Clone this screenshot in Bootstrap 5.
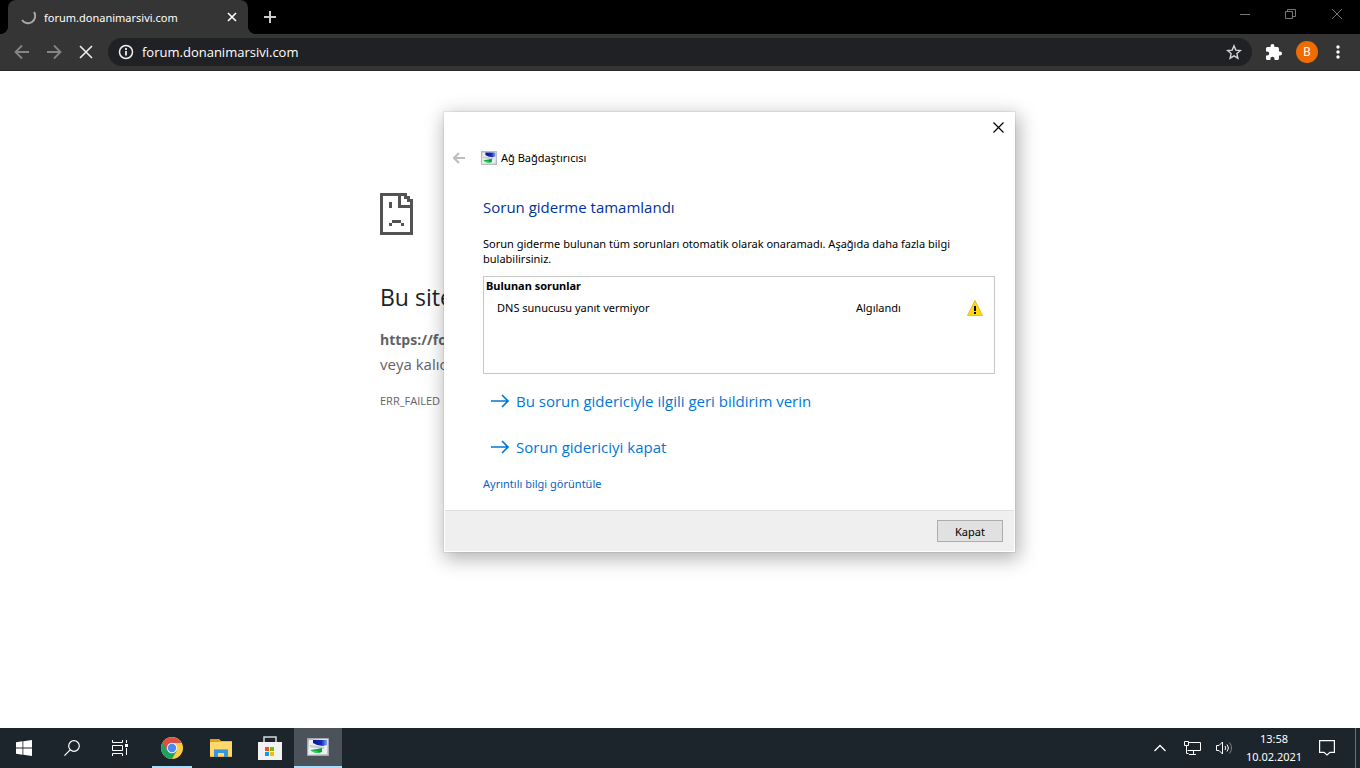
<!DOCTYPE html>
<html lang="tr">
<head>
<meta charset="utf-8">
<meta name="viewport" content="width=device-width, initial-scale=1">
<title>forum.donanimarsivi.com</title>
<link href="https://cdn.jsdelivr.net/npm/bootstrap@5.3.0/dist/css/bootstrap.min.css" rel="stylesheet">
<style>
body { font-family: "Noto Sans", "Open Sans", sans-serif; font-size: 11px; line-height: 15px; color: #000; background: #fff; }
svg { display: block; flex: none; }
button { border: 0; padding: 0; background: none; color: inherit; font-size: 11px; line-height: 15px; }
/* browser chrome */
.tab-strip { background: #000; height: 34px; padding-left: 8px; color: #fff; }
.browser-tab { width: 240px; height: 34px; background: #353535; border-radius: 8px 8px 0 0; padding: 0 11px 0 12px; }
.browser-tab::before, .browser-tab::after { content: ""; position: absolute; bottom: 0; width: 8px; height: 8px; }
.browser-tab::before { left: -8px; background: radial-gradient(circle at 0 0, transparent 8px, #353535 8px); }
.browser-tab::after { right: -8px; background: radial-gradient(circle at 100% 0, transparent 8px, #353535 8px); }
.window-controls { color: #777; gap: 35px; padding: 8px 17px 0 0; }
.toolbar { background: #353535; height: 37px; padding: 0 12px; color: #fff; border-bottom: 1px solid #292929; }
.toolbar-actions { gap: 14px; }
.nav-tools { gap: 12px; width: 82px; }
.address-box { height: 28px; border-radius: 14px; background: #202124; padding: 0 10px; }
.address-box input { font-family: "Open Sans", sans-serif; background: none; border: 0; outline: 0; color: #fff; font-size: 13px; line-height: 18px; padding: 0; min-width: 0; }
.avatar { width: 22px; height: 22px; background: #ef6c00; font-size: 12px; font-family: Roboto, sans-serif; }
/* error page */
.error-page { font-family: "Open Sans", sans-serif; width: 600px; max-width: 100%; margin: 0 auto; padding-top: 122px; color: #5f6368; }
.error-page h1 { font-size: 23px; line-height: 28px; font-weight: 500; color: #202124; margin: 48px 0 16px; }
.error-page p { font-size: 15px; line-height: 24px; margin: 0 0 16px; }
.error-page strong { font-size: 14px; }
.error-page .code { font-size: 11px; line-height: 18px; }
/* troubleshooter window */
.wizard { left: 444px; top: 41px; width: 571px; background: #fff; border: 1px solid #fff; box-shadow: 0 0 0 1px rgba(0,0,0,.06), 2px 5px 18px 2px rgba(0,0,0,.3); }
.wizard-top { padding: 9px 10px 0; }
.wizard-name { padding: 17px 8px 0; }
.wizard-body { padding: 31px 19px 19px 38px; }
.wizard h2 { font-family: "Open Sans", sans-serif; font-size: 15px; line-height: 22px; font-weight: 400; color: #003399; margin: 0 0 18px; }
.issues { height: 98px; border: 1px solid #c8c8c8; margin: 10px 0 16px; padding: 1px 2px; }
.issues table { width: 100%; }
.issues th { font-weight: 700; padding: 0; line-height: 15px; }
.issues td { padding: 5px 0 0; line-height: 20px; }
.issues td:first-child { padding-left: 11px; }
.col-state { width: 111px; }
.col-icon { width: 25px; }
.command { font-family: "Open Sans", sans-serif; color: #0078d7; font-size: 15px; line-height: 22px; gap: 7px; margin-left: 8px; text-decoration: none; }
.commands { gap: 24px; margin-bottom: 18px; }
.details { color: #0a5fc4; text-decoration: none; }
.wizard-foot { background: #efefef; border-top: 1px solid #dfdfdf; padding: 9px 11px; }
.wizard-foot button { background: #e1e1e1; border: 1px solid #adadad; width: 66px; height: 22px; }
/* taskbar */
.taskbar { background: #1c252c; height: 40px; color: #fff; }
.taskbar button { width: 48px; height: 40px; }
.taskbar .pinned { margin-left: 3px; }
.taskbar .app { width: 49px; }
.taskbar .running { background: linear-gradient(#a9dcff, #a9dcff) 50% 100% / 40px 2px no-repeat; }
.taskbar .focused { width: 48px; background: #4b5259; border-bottom: 2px solid #a9dcff; }
.taskbar .tray { width: 32px; }
.clock { width: 68px; line-height: 18px; margin-right: 3px; }
.show-desktop { width: 5px; border-left: 1px solid #6a7075; margin-left: 12px; }
</style>
</head>
<body>
<svg width="0" height="0" class="position-absolute" aria-hidden="true">
  <defs>
    <linearGradient id="frame" x2="1" y2="1"><stop stop-color="#aab0b8"/><stop offset=".4" stop-color="#e4e6e8"/><stop offset="1" stop-color="#bbb"/></linearGradient>
    <linearGradient id="screen"><stop stop-color="#0a188c"/><stop offset=".6" stop-color="#1428b8"/><stop offset="1" stop-color="#7fa6ee"/></linearGradient>
    <symbol id="adapter" viewBox="0 0 22 18" preserveAspectRatio="none">
      <path d="M.5.5h21v17H.5z" fill="url(#frame)" stroke="#a5a9ad"/>
      <path d="M2 2h18v14H2z" fill="#eceef0"/>
      <path d="M6 2h14v5l-4 1-6-1-4-2z" fill="url(#screen)"/>
      <path d="M3 7l8 1 6 1v2L3 9z" fill="#c3cad6"/>
      <path d="M4 12l6-1 5-1v4l-3 1-3-1-5-1z" fill="#0aa43c"/>
      <path d="M3 12l7 1 3 2-5 0z" fill="#35cf63"/>
    </symbol>
  </defs>
</svg>
<div class="d-flex flex-column vh-100 overflow-hidden">
  <header>
    <div class="tab-strip d-flex">
      <div class="browser-tab position-relative d-flex align-items-center">
        <svg width="16" height="16" viewBox="0 0 16 16" fill="none" stroke="#a8a8a8" stroke-width="2"><path d="M14 3A6.500 6.500 0 0 1 2 11"/></svg>
        <span class="flex-grow-1 ps-2">forum.donanimarsivi.com</span>
        <button type="button" aria-label="Sekmeyi kapat"><svg width="10" height="10" viewBox="0 0 10 10" stroke="#fff" stroke-width="1.600"><path d="M1 1l8 8M9 1l-8 8"/></svg></button>
      </div>
      <button type="button" class="ms-3" aria-label="Yeni sekme"><svg width="12" height="12" viewBox="0 0 12 12" stroke="#ccc" stroke-width="2"><path d="M6 0v12M0 6h12"/></svg></button>
      <div class="window-controls d-flex align-items-start ms-auto">
        <button type="button" aria-label="Simge durumuna küçült"><svg width="10" height="12" viewBox="0 0 10 12" stroke="currentColor"><path d="M0 6.500h10"/></svg></button>
        <button type="button" aria-label="Geri yükle"><svg width="11" height="12" viewBox="0 0 11 12" fill="none" stroke="currentColor"><path d="M.5 3.500h7v7h-7zM2.500 3.500v-2h8v7h-3"/></svg></button>
        <button type="button" aria-label="Kapat"><svg width="12" height="12" viewBox="0 0 12 12" stroke="currentColor"><path d="M1 1l10 10M11 1L1 11"/></svg></button>
      </div>
    </div>
    <div class="toolbar toolbar-actions d-flex align-items-center">
      <div class="nav-tools d-flex flex-shrink-0">
        <button type="button" aria-label="Geri"><svg width="20" height="20" viewBox="0 0 20 20" fill="none" stroke="#858585" stroke-width="1.800"><path d="M17 10H4M10 3.500L3.500 10l6.500 6.500"/></svg></button>
        <button type="button" aria-label="İleri"><svg width="20" height="20" viewBox="0 0 20 20" fill="none" stroke="#858585" stroke-width="1.800"><path d="M3 10h13M10 3.500L16.500 10 10 16.500"/></svg></button>
        <button type="button" aria-label="Durdur"><svg width="20" height="20" viewBox="0 0 20 20" stroke="#eee" stroke-width="1.600"><path d="M4 4l12 12M16 4L4 16"/></svg></button>
      </div>
      <div class="address-box d-flex align-items-center flex-grow-1">
        <svg width="16" height="16" viewBox="0 0 16 16" fill="none" stroke="#f0f0f0" stroke-width="1.500"><circle cx="8" cy="8" r="6.500"/><path d="M8 7v4.500M8 4v2" stroke-width="1.800"/></svg>
        <input type="text" class="flex-grow-1 ms-2" value="forum.donanimarsivi.com" aria-label="Adres">
        <button type="button" aria-label="Yer işareti"><svg width="16" height="16" viewBox="0 0 16 16" fill="none" stroke="#d5d5d5" stroke-width="1.400"><path d="M8 1.800l1.800 4.300 4.600.4-3.500 3.100 1 4.600L8 11.800l-3.900 2.400 1-4.600L1.600 6.500l4.600-.4z"/></svg></button>
      </div>
      <button type="button" aria-label="Uzantılar"><svg width="16" height="16" viewBox="2 1 21 21" fill="#fff"><path d="M20.500 11H19V7a2 2 0 0 0-2-2h-4V3.500a2.500 2.500 0 0 0-5 0V5H4a2 2 0 0 0-2 2v3.800h1.500a2.700 2.700 0 0 1 0 5.400H2V20a2 2 0 0 0 2 2h3.800v-1.500a2.700 2.700 0 0 1 5.400 0V22H17a2 2 0 0 0 2-2v-4h1.500a2.500 2.500 0 0 0 0-5z"/></svg></button>
      <button type="button" class="avatar rounded-circle" aria-label="Profil">B</button>
      <button type="button" aria-label="Menü"><svg width="16" height="16" viewBox="0 0 16 16" fill="#fff"><circle cx="6" cy="3" r="1.700"/><circle cx="6" cy="8" r="1.700"/><circle cx="6" cy="13" r="1.700"/></svg></button>
    </div>
  </header>

  <main class="position-relative flex-grow-1">
    <div class="error-page">
      <svg width="33" height="42" viewBox="0 0 33 42" fill="#535353" shape-rendering="crispEdges"><path d="M0 0h27v3h3v3h3v36H0zM3 3v36h27V15H18V3zM21 3v9h9V9h-3V6h-3V3zM9 9h3v6H9zM12 27h9v3h-9zM9 30h3v3H9zM21 30h3v3h-3z" fill-rule="evenodd"/></svg>
      <h1>Bu site</h1>
      <p><strong>https://fo</strong><br>veya kalıc</p>
      <p class="code">ERR_FAILED</p>
    </div>

    <section class="wizard position-absolute" role="dialog" aria-labelledby="wizard-title">
      <div class="wizard-top d-flex justify-content-end"><button type="button" aria-label="Kapat"><svg width="11" height="11" viewBox="0 0 11 11" stroke="#000" stroke-width="1.200"><path d="M.5.5l10 10M10.500.5l-10 10"/></svg></button></div>
      <div class="wizard-name d-flex align-items-center">
        <button type="button" aria-label="Geri"><svg width="12" height="12" viewBox="0 0 12 12" fill="none" stroke="#bdbdbd" stroke-width="2"><path d="M12 6H2M6 1L1 6l5 5"/></svg></button>
        <svg width="16" height="14" class="ms-3"><use href="#adapter" width="16" height="14"/></svg>
        <span class="ms-1">Ağ Bağdaştırıcısı</span>
      </div>
      <div class="wizard-body">
        <h2 id="wizard-title">Sorun giderme tamamlandı</h2>
        <div>Sorun giderme bulunan tüm sorunları otomatik olarak onaramadı. Aşağıda daha fazla bilgi<br>bulabilirsiniz.</div>
        <div class="issues">
          <table>
            <thead><tr><th colspan="3">Bulunan sorunlar</th></tr></thead>
            <tbody><tr>
              <td>DNS sunucusu yanıt vermiyor</td>
              <td class="col-state">Algılandı</td>
              <td class="col-icon"><svg width="16" height="16" viewBox="0 0 16 16" role="img" aria-label="Uyarı"><path d="M8 .5L15.500 15.500H.5z" fill="#ffd90a" stroke="#f8b62a"/><path d="M7 6h2v5H7zM7 12h2v2H7z"/></svg></td>
            </tr></tbody>
          </table>
        </div>
        <div class="commands d-flex flex-column">
          <a href="#" class="command d-flex align-items-center"><svg width="18" height="14" viewBox="0 0 18 14" fill="none" stroke="currentColor" stroke-width="1.600"><path d="M0 7h17M11 1l6 6-6 6"/></svg>Bu sorun gidericiyle ilgili geri bildirim verin</a>
          <a href="#" class="command d-flex align-items-center"><svg width="18" height="14" viewBox="0 0 18 14" fill="none" stroke="currentColor" stroke-width="1.600"><path d="M0 7h17M11 1l6 6-6 6"/></svg>Sorun gidericiyi kapat</a>
        </div>
        <a href="#" class="details d-block">Ayrıntılı bilgi görüntüle</a>
      </div>
      <div class="wizard-foot d-flex justify-content-end"><button type="button">Kapat</button></div>
    </section>
  </main>

  <footer class="taskbar d-flex flex-shrink-0">
    <button type="button" class="d-flex align-items-center justify-content-center" aria-label="Başlat"><svg width="16" height="16" viewBox="0 0 16 16" fill="#fff"><path d="M0 2.200L6.500 1.300v6.300H0zM7.300 1.200L16 0v7.600H7.300zM0 8.400h6.500v6.300L0 13.800zM7.300 8.400H16V16l-8.700-1.200z"/></svg></button>
    <button type="button" class="d-flex align-items-center justify-content-center" aria-label="Ara"><svg width="16" height="16" viewBox="0 0 16 16" fill="none" stroke="#fff" stroke-width="1.200"><circle cx="10" cy="6" r="5.300"/><path d="M6.200 9.800L.4 15.600"/></svg></button>
    <button type="button" class="d-flex align-items-center justify-content-center" aria-label="Görev görünümü"><svg width="16" height="16" viewBox="0 0 16 16" fill="none" stroke="#fff"><path d="M.5 0v2.500h10V0M.5 5.500h10v5H.5zM.5 16v-2.500h10V16M14.500 0v3M14.500 8v7"/><path d="M13 4h3v3h-3z" fill="#fff" stroke="none"/></svg></button>
    <div class="pinned d-flex">
      <button type="button" class="app running d-flex align-items-center justify-content-center" aria-label="Chrome"><svg width="22" height="22" viewBox="0 0 22 22"><circle cx="11" cy="11" r="11" fill="#ffcd42"/><path d="M1.500 5.500A11 11 0 0 0 11 22l4.800-8.300L11 11z" fill="#1da261"/><path d="M11 5.900h9.500A11 11 0 0 0 1.500 5.500l4.700 8L8 7.200z" fill="#dd5144"/><circle cx="11" cy="11" r="5.200" fill="#eef3fb"/><circle cx="11" cy="11" r="4.200" fill="#4a8af4"/></svg></button>
      <button type="button" class="app d-flex align-items-center justify-content-center" aria-label="Dosya Gezgini"><svg width="22" height="18" viewBox="0 0 22 18"><path d="M0 0h9l2 2h11v16H0z" fill="#f3b52c"/><path d="M0 3h22v14H0z" fill="#ffd96b"/><path d="M0 0h8l2 2-1 1H0z" fill="#e79d15"/><path d="M4 10h14v8h-4v-4H8v4H4z" fill="#3b94dc"/><path d="M4 10h14v1H4z" fill="#67b3ea"/></svg></button>
      <button type="button" class="app d-flex align-items-center justify-content-center" aria-label="Store"><svg width="24" height="24" viewBox="0 0 24 24"><path d="M6 6V1h12v5" fill="none" stroke="#d8d8d8" stroke-width="1.500"/><path d="M0 6h24v18H0z" fill="#f2f2f2"/><path d="M7 11h4v4H7z" fill="#f25022"/><path d="M12 11h4v4h-4z" fill="#7fba00"/><path d="M7 16h4v4H7z" fill="#00a4ef"/><path d="M12 16h4v4h-4z" fill="#ffb900"/></svg></button>
      <button type="button" class="focused d-flex align-items-center justify-content-center" aria-label="Ağ Bağdaştırıcısı"><svg width="22" height="18"><use href="#adapter" width="22" height="18"/></svg></button>
    </div>
    <div class="d-flex ms-auto">
      <button type="button" class="tray d-flex align-items-center justify-content-center" aria-label="Gizli simgeler"><svg width="12" height="8" viewBox="0 0 12 8" fill="none" stroke="#fff" stroke-width="1.300"><path d="M.5 7L6 1.500 11.500 7"/></svg></button>
      <button type="button" class="tray d-flex align-items-center justify-content-center" aria-label="Ağ"><svg width="17" height="14" viewBox="0 0 17 14" fill="none" stroke="#fff"><path d="M5 1.500h11.500v8H3.500M.5 1v3.500h4V.5h-4zM2.500 5v7.500h2M9.500 10v3M5 13.500h7"/></svg></button>
      <button type="button" class="tray d-flex align-items-center justify-content-center" aria-label="Ses"><svg width="17" height="14" viewBox="0 0 17 14" fill="none" stroke="#fff"><path d="M.5 4.500h2.500L6.500 1v12L3 9.500H.5zM9 5q1.500 2 0 4M11 3.500q3 3.500 0 7"/><path d="M13.500 1.500q4 5.500 0 11" stroke="#7d8488"/></svg></button>
      <div class="clock d-flex flex-column justify-content-center text-center"><span>13:58</span><span>10.02.2021</span></div>
      <button type="button" class="tray d-flex align-items-center justify-content-center" aria-label="Bildirimler"><svg width="16" height="16" viewBox="0 0 16 16" fill="none" stroke="#fff" stroke-width="1.200"><path d="M.6.6h14.800v11.800h-4.400L8 15l-3-2.600H.6z"/></svg></button>
      <div class="show-desktop"></div>
    </div>
  </footer>
</div>
<script src="https://cdn.jsdelivr.net/npm/bootstrap@5.3.0/dist/js/bootstrap.bundle.min.js"></script>
</body>
</html>
